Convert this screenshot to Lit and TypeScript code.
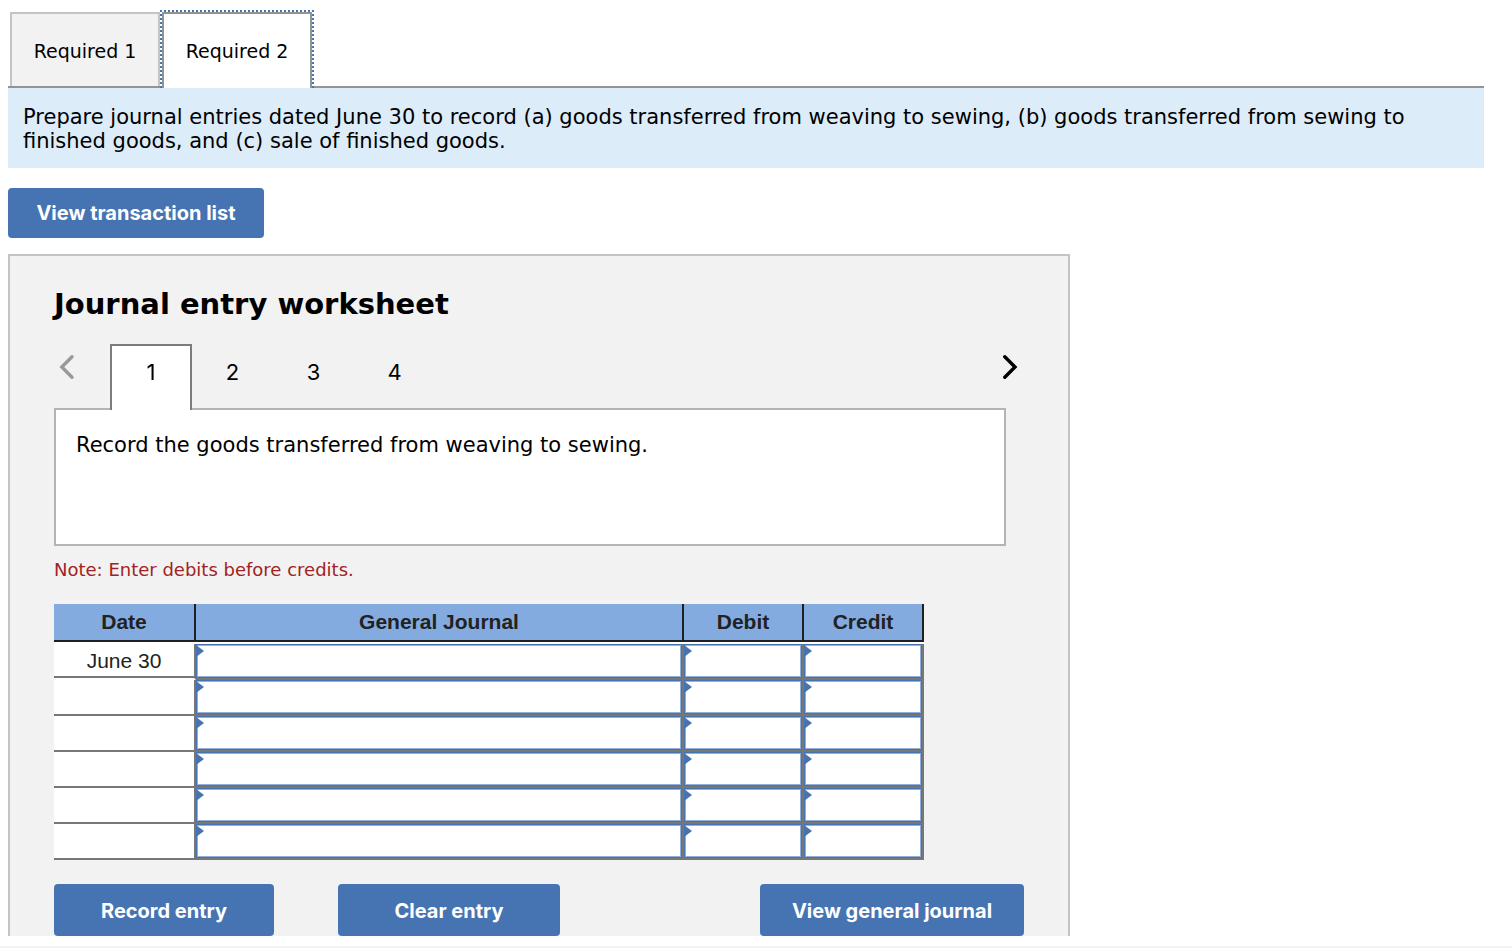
import { LitElement, html, css } from "lit";
import { customElement, state } from "lit/decorators.js";
import { classMap } from "lit/directives/class-map.js";

interface Row {
  date: string;
}

const ROWS: Row[] = [
  { date: "June 30" },
  { date: "" },
  { date: "" },
  { date: "" },
  { date: "" },
  { date: "" },
];

const COLUMNS = ["General Journal", "Debit", "Credit"];

@customElement("journal-table")
export class JournalTable extends LitElement {
  static styles = css`
    :host {
      display: block;
      max-width: 870px;
    }
    table {
      width: 100%;
      table-layout: fixed;
      border-collapse: separate;
      border-spacing: 0;
      background: #fff;
      font-family: "Liberation Sans", Arial, sans-serif;
      font-size: 21px;
      line-height: 24px;
      color: #222;
    }
    .col-date {
      width: 142px;
    }
    .col-amount {
      width: 120px;
    }
    th,
    td {
      box-sizing: border-box;
      padding: 0;
      border: 0 solid #777;
      border-width: 0 2px 2px 0;
      text-align: center;
    }
    th {
      height: 38px;
      border-color: #1f2022;
      background: #83abe0;
      font-weight: 700;
    }
    td {
      height: 36px;
    }
    .spacer td {
      height: 2px;
      border: 0;
    }
    .filled {
      border-bottom-color: #fff;
      box-shadow: inset 0 -2px #777;
    }
    .cell {
      position: relative;
      display: block;
    }
    .cell::before {
      content: "";
      position: absolute;
      left: 0;
      top: 1px;
      border: solid transparent;
      border-width: 6px 0 6px 8px;
      border-left-color: #4674b2;
    }
    input {
      box-sizing: border-box;
      display: block;
      width: 100%;
      height: 34px;
      margin: 0;
      padding: 0 12px;
      border: 1px solid #4674b2;
      border-radius: 0;
      box-shadow: inset 0 0 0 1px #8fafdc;
      background: #fff;
      font: inherit;
      color: inherit;
      outline: none;
    }
  `;

  render() {
    return html`
      <table>
        <colgroup>
          <col class="col-date" />
          <col />
          <col class="col-amount" />
          <col class="col-amount" />
        </colgroup>
        <thead>
          <tr>
            <th scope="col">Date</th>
            ${COLUMNS.map((name) => html`<th scope="col">${name}</th>`)}
          </tr>
        </thead>
        <tbody>
          <tr class="spacer" aria-hidden="true"><td colspan="4"></td></tr>
          ${ROWS.map(
            (row, i) => html`
              <tr>
                <td class=${classMap({ filled: row.date !== "" })}>${row.date}</td>
                ${COLUMNS.map(
                  (name) => html`
                    <td>
                      <label class="cell"
                        ><input type="text" aria-label="${name}, row ${i + 1}"
                      /></label>
                    </td>
                  `
                )}
              </tr>
            `
          )}
        </tbody>
      </table>
    `;
  }
}

@customElement("app-root")
export class AppRoot extends LitElement {
  @state() private requirement = 2;
  @state() private entry = 1;

  static styles = css`
    :host {
      display: block;
      padding-top: 10px;
      background: #fff;
      color: #000;
      font-family: "DejaVu Sans", Verdana, sans-serif;
    }
    button {
      margin: 0;
      border: 0;
      cursor: pointer;
      font-family: inherit;
      color: inherit;
    }
    .page {
      padding: 0 28px 0 8px;
    }
    .tabs {
      display: flex;
      border-bottom: 2px solid #949494;
    }
    .tab {
      box-sizing: border-box;
      width: 150px;
      height: 74px;
      margin: 2px 0 0 2px;
      padding: 2px 0 0;
      border: 2px solid #c4c4c4;
      border-bottom: 0;
      background: #f2f2f2;
      font-size: 19px;
      line-height: 24px;
    }
    .tab.active {
      width: 154px;
      height: 78px;
      margin: 0 0 -2px 0;
      border: 2px dotted #4674b2;
      border-bottom: 0;
      background: #fff;
      box-shadow: inset 2px 2px #949494, inset -2px 0 #949494;
    }
    .instructions {
      margin: 0;
      padding: 17px 60px 15px 15px;
      background: #dcecf9;
      font-size: 21px;
      line-height: 24px;
    }
    .action {
      box-sizing: border-box;
      height: 52px;
      padding: 2px 26px 0;
      border-radius: 4px;
      background: #4674b2;
      color: #fff;
      font-family: Inter, sans-serif;
      font-size: 20px;
      font-weight: 700;
      line-height: 24px;
    }
    .list {
      display: block;
      min-width: 256px;
      height: 50px;
      margin: 20px 0 16px;
      padding-top: 0;
    }
    .worksheet {
      box-sizing: border-box;
      max-width: 1062px;
      padding: 28px 44px 0;
      border: 2px solid #c4c4c4;
      border-bottom: 0;
      background: #f2f2f2;
    }
    h1 {
      margin: 0 0 20px;
      font-size: 29px;
      line-height: 40px;
      font-weight: 700;
    }
    .pager {
      display: flex;
      align-items: flex-start;
    }
    .arrow {
      display: flex;
      width: 26px;
      height: 46px;
      padding: 0;
      align-items: center;
      justify-content: center;
      background: none;
    }
    .arrow.prev {
      color: #999;
    }
    .pages {
      display: flex;
      flex: 1;
      padding-left: 30px;
    }
    .entry {
      box-sizing: border-box;
      width: 81px;
      height: 64px;
      padding: 0 0 8px;
      background: none;
      font-family: Inter, sans-serif;
      font-size: 22px;
      line-height: 24px;
    }
    .entry.active {
      z-index: 1;
      width: 82px;
      height: 66px;
      margin-bottom: -2px;
      padding-bottom: 12px;
      border: 2px solid #7c7c7c;
      border-bottom: 0;
      background: #fff;
    }
    .prompt {
      box-sizing: border-box;
      min-height: 138px;
      margin: 0 18px 0 0;
      padding: 23px 20px;
      border: 2px solid #b4b4b4;
      background: #fff;
      font-size: 21px;
      line-height: 24px;
    }
    .note {
      margin: 12px 0 22px;
      color: #a02323;
      font-size: 18px;
      line-height: 24px;
    }
    .actions {
      display: flex;
      flex-wrap: wrap;
      margin-top: 24px;
    }
    .record {
      min-width: 220px;
      margin-right: 64px;
    }
    .clear {
      min-width: 222px;
    }
    .last {
      min-width: 264px;
      margin-left: auto;
    }
    .rule {
      height: 2px;
      margin: 10px 0 0;
      border: 0;
      background: #f2f2f2;
    }
  `;

  render() {
    return html`
      <div class="page">
        <div class="tabs" role="tablist">
          ${[1, 2].map(
            (n) => html`
              <button
                role="tab"
                aria-selected=${this.requirement === n}
                class=${classMap({ tab: true, active: this.requirement === n })}
                @click=${() => (this.requirement = n)}
              >Required ${n}</button>
            `
          )}
        </div>
        <p class="instructions">
          Prepare journal entries dated June 30 to record (a) goods transferred from
          weaving to sewing, (b) goods transferred from sewing to finished goods, and
          (c) sale of finished goods.
        </p>
        <button class="action list">View transaction list</button>
        <section class="worksheet">
          <h1>Journal entry worksheet</h1>
          <div class="pager">
            <button class="arrow prev" aria-label="Previous entry">
              <svg width="16" height="26" viewBox="0 0 16 26" fill="none"
                stroke="currentColor" stroke-width="3.4" stroke-linecap="round">
                <path d="M13 2.8 2.8 13 13 23.2" />
              </svg>
            </button>
            <div class="pages" role="tablist">
              ${[1, 2, 3, 4].map(
                (n) => html`
                  <button
                    role="tab"
                    aria-selected=${this.entry === n}
                    class=${classMap({ entry: true, active: this.entry === n })}
                    @click=${() => (this.entry = n)}
                  >${n}</button>
                `
              )}
            </div>
            <button class="arrow" aria-label="Next entry">
              <svg width="16" height="26" viewBox="0 0 16 26" fill="none"
                stroke="currentColor" stroke-width="3.4" stroke-linecap="round">
                <path d="M1.8 2.8 12 13 1.8 23.2" />
              </svg>
            </button>
          </div>
          <div class="prompt">Record the goods transferred from weaving to sewing.</div>
          <p class="note">Note: Enter debits before credits.</p>
          <journal-table></journal-table>
          <div class="actions">
            <button class="action record">Record entry</button>
            <button class="action clear">Clear entry</button>
            <button class="action last">View general journal</button>
          </div>
        </section>
      </div>
      <hr class="rule" />
    `;
  }
}
